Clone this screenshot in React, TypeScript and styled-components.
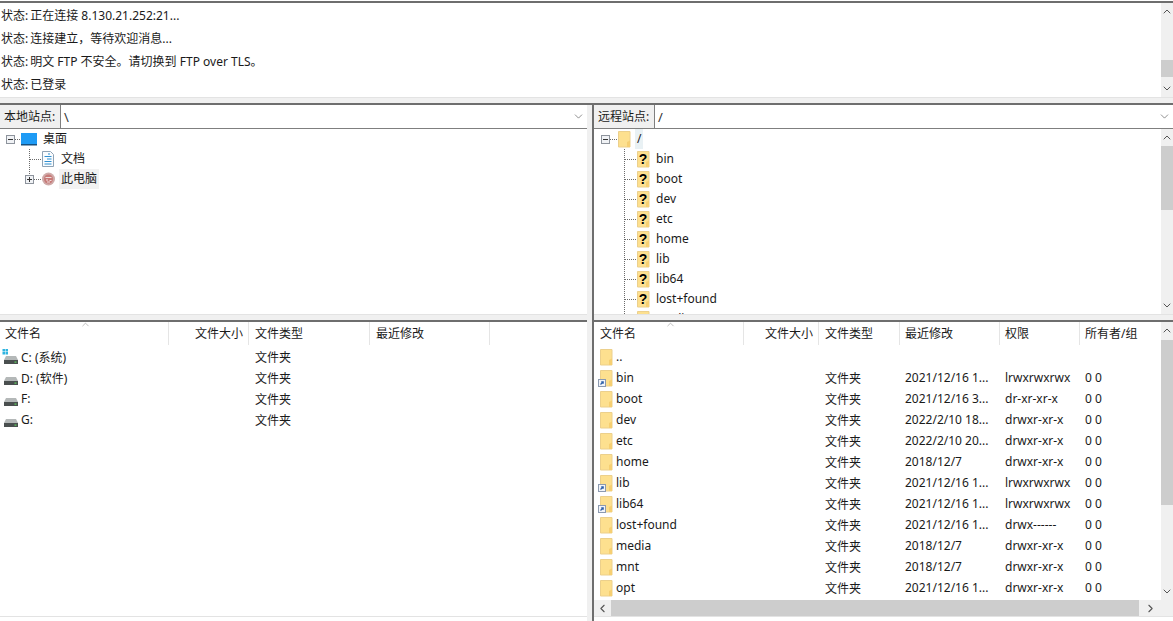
import styled, { createGlobalStyle } from 'styled-components';
import { ChevronDown, ChevronLeft, ChevronRight, ChevronUp } from 'lucide-react';

const GlobalStyle = createGlobalStyle`
  html, body {
    margin: 0;
    padding: 0;
    background: #fff;
  }
  body {
    font-family: "Noto Sans", "Noto Sans CJK SC", sans-serif;
    font-size: 12px;
    color: #1a1a1a;
  }
`;

const localFiles = [
  { name: 'C: (系统)', system: true },
  { name: 'D: (软件)', system: false },
  { name: 'F:', system: false },
  { name: 'G:', system: false },
];

const remoteFiles = [
  { name: '..', date: '', perm: '', owner: '' },
  { name: 'bin', date: '2021/12/16 1...', perm: 'lrwxrwxrwx', owner: '0 0', link: true },
  { name: 'boot', date: '2021/12/16 3...', perm: 'dr-xr-xr-x', owner: '0 0' },
  { name: 'dev', date: '2022/2/10 18...', perm: 'drwxr-xr-x', owner: '0 0' },
  { name: 'etc', date: '2022/2/10 20...', perm: 'drwxr-xr-x', owner: '0 0' },
  { name: 'home', date: '2018/12/7', perm: 'drwxr-xr-x', owner: '0 0' },
  { name: 'lib', date: '2021/12/16 1...', perm: 'lrwxrwxrwx', owner: '0 0', link: true },
  { name: 'lib64', date: '2021/12/16 1...', perm: 'lrwxrwxrwx', owner: '0 0', link: true },
  { name: 'lost+found', date: '2021/12/16 1...', perm: 'drwx------', owner: '0 0' },
  { name: 'media', date: '2018/12/7', perm: 'drwxr-xr-x', owner: '0 0' },
  { name: 'mnt', date: '2018/12/7', perm: 'drwxr-xr-x', owner: '0 0' },
  { name: 'opt', date: '2021/12/16 1...', perm: 'drwxr-xr-x', owner: '0 0' },
];

const remoteDirs = ['bin', 'boot', 'dev', 'etc', 'home', 'lib', 'lib64', 'lost+found', 'media'];

const logLines = [
  '正在连接 8.130.21.252:21...',
  '连接建立，等待欢迎消息...',
  '明文 FTP 不安全。请切换到 FTP over TLS。',
  '已登录',
];

const FolderIcon = ({ link, width = 13 }: { link?: boolean; width?: number }) => (
  <svg width={width} height="18" viewBox={`${13 - width} 0 ${width} 18`} style={{ flexShrink: 0 }}>
    <path d="M0.5 1.5h11.5v15.5H0.5z" fill="#fde08f" stroke="#ecd08c" />
    <path d="M9 17v-5l3-1.500v6.500z" fill="#f6cf72" />
    {link && (
      <g>
        <rect x="-1.500" y="10.500" width="7" height="7" fill="#f2f4f8" stroke="#8c9ab0" />
        <path d="M0.500 15.500l2.500-2.500M1.200 12.800h2v2" fill="none" stroke="#2d5fa8" strokeWidth="1.200" />
      </g>
    )}
  </svg>
);

const QuestionFolder = () => (
  <svg width="13" height="18" viewBox="0 0 13 18" style={{ flexShrink: 0 }}>
    <path d="M0.500 1.500h11.500v15.500H0.500z" fill="#fde08f" stroke="#ecd08c" />
    <path d="M9 17v-5l3-1.500v6.500z" fill="#f6cf72" />
    <text x="6" y="14" textAnchor="middle" fontSize="14" fontWeight="700" fill="#000" fontFamily="Liberation Sans">
      ?
    </text>
  </svg>
);

const DriveIcon = ({ system }: { system: boolean }) => (
  <svg width="18" height="18" viewBox="0 0 18 18" style={{ flexShrink: 0 }}>
    {system && (
      <g fill="#2fb4e0">
        <rect x="0.500" y="1" width="2.500" height="2.500" />
        <rect x="3.500" y="1" width="2.500" height="2.500" />
        <rect x="0.500" y="4" width="2.500" height="2.500" />
        <rect x="3.500" y="4" width="2.500" height="2.500" />
      </g>
    )}
    <path d="M2 12l2-4h10l2 4z" fill="#b4b8b8" />
    <rect x="2" y="12" width="14" height="4" fill="#4a4f4f" />
    <rect x="12.500" y="13.500" width="2" height="1.200" fill="#5fd35f" />
  </svg>
);

const MonitorIcon = () => (
  <svg width="16" height="16" viewBox="0 0 16 16" style={{ flexShrink: 0 }}>
    <rect x="0" y="2" width="16" height="12" fill="#1e9bf5" />
    <rect x="0" y="13" width="16" height="1.500" fill="#16507f" />
  </svg>
);

const DocIcon = () => (
  <svg width="13" height="16" viewBox="0 0 13 16" style={{ flexShrink: 0 }}>
    <path d="M0.500 0.500h8l3 3v12h-11z" fill="#fafcfe" stroke="#8fa3b5" />
    <path d="M6 3h2M2.500 5.500h7M5 8h4.500M2.500 10.500h7M2.500 13h7" stroke="#2f8fd0" strokeWidth="1.100" />
  </svg>
);

const ComputerAvatar = () => (
  <svg width="13" height="14" viewBox="0 0 13 14" style={{ flexShrink: 0 }}>
    <circle cx="6.500" cy="7" r="6.500" fill="#cfaaa8" />
    <circle cx="6.500" cy="7" r="4.500" fill="#c77a78" />
    <path d="M3.500 5.500h6M4 8h2M7.500 8.500h2M5 10h3" stroke="#f0dedc" strokeWidth="1" />
  </svg>
);

type GuideProps = {
  width: number;
  expander?: { x: number; open: boolean };
  trunk?: { x: number; to: number };
  branch?: { from: number; to: number };
};

const Guide = ({ width, expander, trunk, branch }: GuideProps) => (
  <svg width={width} height="20" viewBox={`0 0 ${width} 20`} style={{ flexShrink: 0 }}>
    {trunk && (
      <path d={`M${trunk.x + 0.5} 0V${trunk.to}`} stroke="#6a6a6a" strokeDasharray="1 1" />
    )}
    {branch && (
      <path d={`M${branch.from} 10.500H${branch.to}`} stroke="#6a6a6a" strokeDasharray="1 1" />
    )}
    {expander && (
      <g>
        <rect x={expander.x + 0.5} y="6.500" width="8" height="8" fill="#f0f2f5" stroke="#8d939c" />
        <path d={`M${expander.x + 2} 10.500h5`} stroke="#333" />
        {!expander.open && <path d={`M${expander.x + 4.5} 8v5`} stroke="#333" />}
      </g>
    )}
  </svg>
);

const VScrollBar = ({ top, height }: { top: number; height: number }) => (
  <VTrack>
    <ScrollArrow>
      <ChevronUp size={13} strokeWidth={2} />
    </ScrollArrow>
    <VThumbSlot>
      <VThumb $top={top} $height={height} />
    </VThumbSlot>
    <ScrollArrow>
      <ChevronDown size={13} strokeWidth={2} />
    </ScrollArrow>
  </VTrack>
);

const SiteBar = ({ label, path }: { label: string; path: string }) => (
  <SiteRow>
    <SiteLabel>{label}</SiteLabel>
    <SiteCombo>
      <span>{path}</span>
      <ChevronDown size={13} strokeWidth={1} />
    </SiteCombo>
  </SiteRow>
);

const LOCAL_COLS = '169px 80px 121px 120px 1fr';
const REMOTE_COLS = '150px 75px 81px 100px 80px 1fr';

const App = () => {
  return (
    <Frame>
      <GlobalStyle />
      <LogPanel>
        <LogLines>
          {logLines.map((line) => (
            <LogLine key={line}>
              <LogTag>状态:</LogTag>
              {line}
            </LogLine>
          ))}
        </LogLines>
        <VScrollBar top={40} height={17} />
      </LogPanel>
      <Sash />
      <Panes>
        <LocalPane>
          <SiteBar label="本地站点:" path="\" />
          <TreePanel>
            <TreeBody>
              <TreeRow>
                <Guide width={21} expander={{ x: 6, open: true }} branch={{ from: 15, to: 21 }} />
                <MonitorIcon />
                <TreeLabel>桌面</TreeLabel>
              </TreeRow>
              <TreeRow>
                <Guide width={42} trunk={{ x: 29, to: 20 }} branch={{ from: 30, to: 42 }} />
                <DocIcon />
                <TreeLabel>文档</TreeLabel>
              </TreeRow>
              <TreeRow>
                <Guide
                  width={42}
                  trunk={{ x: 29, to: 7 }}
                  expander={{ x: 25, open: false }}
                  branch={{ from: 34, to: 42 }}
                />
                <ComputerAvatar />
                <TreeLabel $selected>此电脑</TreeLabel>
              </TreeRow>
            </TreeBody>
          </TreePanel>
          <PaneSash />
          <ListPanel>
            <ListMain>
              <ListHeader $cols={LOCAL_COLS}>
                <SortMark $left={85}>
                  <ChevronUp size={11} strokeWidth={1} />
                </SortMark>
                <HeadCell $inset={5}>文件名</HeadCell>
                <HeadCell $right>文件大小</HeadCell>
                <HeadCell $inset={6}>文件类型</HeadCell>
                <HeadCell $inset={6}>最近修改</HeadCell>
                <HeadCell $open />
              </ListHeader>
              <ListRows>
                {localFiles.map((file) => (
                  <ListRow key={file.name} $cols={LOCAL_COLS}>
                    <NameCell $inset={2} $gap={1}>
                      <DriveIcon system={file.system} />
                      {file.name}
                    </NameCell>
                    <span />
                    <Cell $inset={6}>文件夹</Cell>
                  </ListRow>
                ))}
              </ListRows>
            </ListMain>
          </ListPanel>
        </LocalPane>
        <PaneGap />
        <RemotePane>
          <SiteBar label="远程站点:" path="/" />
          <TreePanel>
            <TreeBody>
              <TreeRow>
                <Guide width={24} expander={{ x: 7, open: true }} branch={{ from: 16, to: 24 }} />
                <FolderIcon />
                <TreeLabel $tint>/</TreeLabel>
              </TreeRow>
              {remoteDirs.map((dir) => (
                <TreeRow key={dir}>
                  <Guide width={43} trunk={{ x: 30, to: 20 }} branch={{ from: 31, to: 43 }} />
                  {dir === 'media' ? <FolderIcon /> : <QuestionFolder />}
                  <TreeLabel>{dir}</TreeLabel>
                </TreeRow>
              ))}
            </TreeBody>
            <VScrollBar top={0} height={64} />
          </TreePanel>
          <PaneSash />
          <ListPanel>
            <ListMain>
              <ListHeader $cols={REMOTE_COLS}>
                <SortMark $left={76}>
                  <ChevronUp size={11} strokeWidth={1} />
                </SortMark>
                <HeadCell $inset={6}>文件名</HeadCell>
                <HeadCell $right>文件大小</HeadCell>
                <HeadCell $inset={6}>文件类型</HeadCell>
                <HeadCell $inset={5}>最近修改</HeadCell>
                <HeadCell $inset={5}>权限</HeadCell>
                <HeadCell $inset={5} $open>
                  所有者/组
                </HeadCell>
              </ListHeader>
              <ListRows>
                {remoteFiles.map((file) => (
                  <ListRow key={file.name} $cols={REMOTE_COLS}>
                    <NameCell $inset={file.link ? 4 : 6} $gap={3}>
                      <FolderIcon link={file.link} width={file.link ? 15 : 13} />
                      {file.name}
                    </NameCell>
                    <span />
                    <Cell $inset={6}>{file.name === '..' ? '' : '文件夹'}</Cell>
                    <Cell $inset={5}>{file.date}</Cell>
                    <Cell $inset={5}>{file.perm}</Cell>
                    <Cell $inset={5}>{file.owner}</Cell>
                  </ListRow>
                ))}
              </ListRows>
              <HTrack>
                <ScrollArrowH>
                  <ChevronLeft size={13} strokeWidth={2} />
                </ScrollArrowH>
                <HThumb />
                <ScrollArrowH $wide>
                  <ChevronRight size={13} strokeWidth={2} />
                </ScrollArrowH>
              </HTrack>
            </ListMain>
            <ListSide>
              <VScrollBar top={1} height={165} />
              <Corner />
            </ListSide>
          </ListPanel>
        </RemotePane>
      </Panes>
    </Frame>
  );
};

export default App;

const Frame = styled.div`
  width: 1173px;
  height: 621px;
  display: flex;
  flex-direction: column;
  overflow: hidden;
  background: #fff;
  padding-top: 1px;
  box-sizing: border-box;
`;

const LogPanel = styled.div`
  height: 96px;
  flex-shrink: 0;
  display: flex;
  border-top: 2px solid #6e6e6e;
  box-sizing: border-box;
`;

const LogLines = styled.div`
  flex: 1;
  padding: 1px 0 0 1px;
`;

const LogLine = styled.div`
  height: 23px;
  line-height: 23px;
  white-space: nowrap;
`;

const LogTag = styled.span`
  margin-right: 2px;
`;

const Sash = styled.div`
  height: 6px;
  flex-shrink: 0;
  background: #f0f0f0;
  border-top: 1px solid #e3e3e3;
  box-sizing: border-box;
`;

const Panes = styled.div`
  flex: 1;
  min-height: 0;
  display: flex;
  border-top: 2px solid #6e6e6e;
`;

const LocalPane = styled.div`
  width: 587px;
  flex-shrink: 0;
  display: flex;
  flex-direction: column;
`;

const PaneGap = styled.div`
  width: 5px;
  flex-shrink: 0;
  background: #f0f0f0;
`;

const RemotePane = styled.div`
  flex: 1;
  min-width: 0;
  display: flex;
  flex-direction: column;
  border-left: 2px solid #6e6e6e;
`;

const SiteRow = styled.div`
  height: 24px;
  flex-shrink: 0;
  display: flex;
  border-bottom: 1px solid #7f7f7f;
  box-sizing: border-box;
`;

const SiteLabel = styled.div`
  width: 61px;
  flex-shrink: 0;
  box-sizing: border-box;
  padding-left: 4px;
  line-height: 23px;
  white-space: nowrap;
  background: #f0f0f0;
  border-right: 1px solid #7f7f7f;
`;

const SiteCombo = styled.div`
  flex: 1;
  display: flex;
  align-items: center;
  justify-content: space-between;
  padding: 0 2px 0 3px;
  font-size: 13px;
  color: #333;
`;

const TreePanel = styled.div`
  height: 185px;
  flex-shrink: 0;
  display: flex;
  overflow: hidden;
`;

const TreeBody = styled.div`
  flex: 1;
  min-width: 0;
  overflow: hidden;
`;

const TreeRow = styled.div`
  height: 20px;
  display: flex;
  align-items: center;
`;

const TreeLabel = styled.span<{ $selected?: boolean; $tint?: boolean }>`
  margin-left: 4px;
  padding: 0 2px;
  line-height: 20px;
  background: ${(props) => (props.$selected ? '#f2f2f2' : props.$tint ? '#e9f1f4' : 'transparent')};
`;

const PaneSash = styled.div`
  height: 8px;
  flex-shrink: 0;
  box-sizing: border-box;
  background: #f0f0f0;
  border-top: 1px solid #e3e3e3;
  border-bottom: 2px solid #6e6e6e;
`;

const ListPanel = styled.div`
  height: 294px;
  flex-shrink: 0;
  display: flex;
  border-bottom: 1px solid #e3e3e3;
  box-sizing: content-box;
`;

const ListMain = styled.div`
  flex: 1;
  min-width: 0;
  display: flex;
  flex-direction: column;
`;

const ListHeader = styled.div<{ $cols: string }>`
  position: relative;
  height: 24px;
  flex-shrink: 0;
  display: grid;
  grid-template-columns: ${(props) => props.$cols};
`;

const SortMark = styled.span<{ $left: number }>`
  position: absolute;
  left: ${(props) => props.$left - 5}px;
  top: -3px;
  color: #777;
  line-height: 0;
`;

const HeadCell = styled.div<{ $inset?: number; $right?: boolean; $open?: boolean }>`
  line-height: 23px;
  height: 23px;
  box-sizing: border-box;
  padding-left: ${(props) => props.$inset ?? 0}px;
  padding-right: ${(props) => (props.$right ? 5 : 0)}px;
  text-align: ${(props) => (props.$right ? 'right' : 'left')};
  border-right: ${(props) => (props.$open ? 'none' : '1px solid #e5e5e5')};
  white-space: nowrap;
`;

const ListRows = styled.div`
  flex: 1;
  min-height: 0;
  overflow: hidden;
`;

const ListRow = styled.div<{ $cols: string }>`
  height: 21px;
  display: grid;
  grid-template-columns: ${(props) => props.$cols};
  align-items: center;
`;

const Cell = styled.div<{ $inset: number }>`
  padding-left: ${(props) => props.$inset}px;
  white-space: nowrap;
`;

const NameCell = styled.div<{ $inset: number; $gap: number }>`
  display: flex;
  align-items: center;
  gap: ${(props) => props.$gap}px;
  padding-left: ${(props) => props.$inset}px;
  white-space: nowrap;
`;

const VTrack = styled.div`
  width: 12px;
  flex-shrink: 0;
  display: flex;
  flex-direction: column;
  background: #f0f0f0;
  min-height: 0;
  color: #555;
`;

const ScrollArrow = styled.div`
  height: 17px;
  flex-shrink: 0;
  display: flex;
  align-items: center;
  justify-content: center;
`;

const VThumbSlot = styled.div`
  flex: 1;
  min-height: 0;
`;

const VThumb = styled.div<{ $top: number; $height: number }>`
  margin-top: ${(props) => props.$top}px;
  height: ${(props) => props.$height}px;
  background: #cdcdcd;
`;

const ListSide = styled.div`
  width: 12px;
  flex-shrink: 0;
  display: flex;
  flex-direction: column;

  ${VTrack} {
    flex: 1;
  }
`;

const Corner = styled.div`
  height: 16px;
  flex-shrink: 0;
  background: #f0f0f0;
`;

const HTrack = styled.div`
  height: 16px;
  flex-shrink: 0;
  display: flex;
  background: #f0f0f0;
  color: #555;
`;

const ScrollArrowH = styled.div<{ $wide?: boolean }>`
  width: ${(props) => (props.$wide ? 22 : 17)}px;
  flex-shrink: 0;
  display: flex;
  align-items: center;
  justify-content: center;
`;

const HThumb = styled.div`
  flex: 1;
  background: #cdcdcd;
`;
